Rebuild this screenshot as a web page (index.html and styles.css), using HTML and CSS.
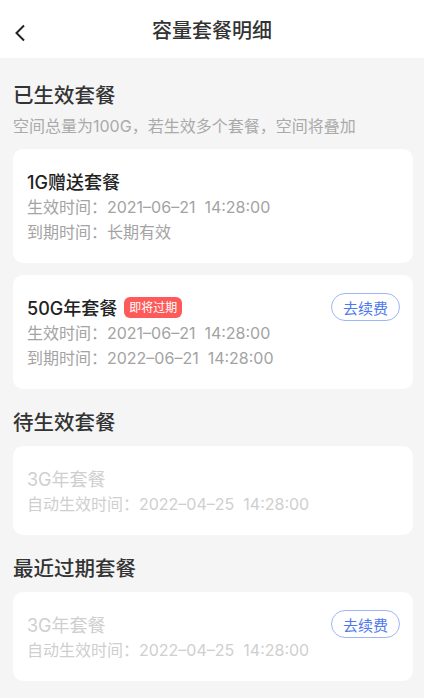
FILE: index.html
```html
<!DOCTYPE html>
<html lang="zh-CN">
<head>
    <meta charset="UTF-8">
    <meta name="viewport" content="width=device-width, initial-scale=1.0">
    <title>容量套餐明细</title>
    <link rel="stylesheet" href="styles.css">
</head>
<body>

<header class="nav">
    <span class="back">
        <svg width="12" height="18" viewBox="0 0 12 18"><path d="M10 1.5 L2.5 9 L10 16.5" fill="none" stroke="#222" stroke-width="2"/></svg>
    </span>
    <h1>容量套餐明细</h1>
</header>

<main>
    <h2 class="section-title">已生效套餐</h2>
    <p class="section-tip">空间总量为100G，若生效多个套餐，空间将叠加</p>

    <div class="card">
        <div class="card-head">
            <div class="card-name">1G赠送套餐</div>
        </div>
        <div class="card-line">生效时间：2021–06–21&nbsp;&nbsp;14:28:00</div>
        <div class="card-line">到期时间：长期有效</div>
    </div>

    <div class="card">
        <div class="card-head">
            <div class="card-name">50G年套餐</div>
            <span class="badge">即将过期</span>
            <button class="renew">去续费</button>
        </div>
        <div class="card-line">生效时间：2021–06–21&nbsp;&nbsp;14:28:00</div>
        <div class="card-line">到期时间：2022–06–21&nbsp;&nbsp;14:28:00</div>
    </div>

    <h2 class="section-title">待生效套餐</h2>
    <div class="card disabled">
        <div class="card-head">
            <div class="card-name">3G年套餐</div>
        </div>
        <div class="card-line">自动生效时间：2022–04–25&nbsp;&nbsp;14:28:00</div>
    </div>

    <h2 class="section-title">最近过期套餐</h2>
    <div class="card disabled">
        <div class="card-head">
            <div class="card-name">3G年套餐</div>
            <button class="renew">去续费</button>
        </div>
        <div class="card-line">自动生效时间：2022–04–25&nbsp;&nbsp;14:28:00</div>
    </div>
</main>

</body>
</html>
```

FILE: styles.css
```css
body {
    font-family: "Inter", "Noto Sans CJK SC", sans-serif;
    background-color: #f5f5f5;
    margin: 0;
    padding: 0;
    color: #333;
}

.nav {
    height: 58px;
    background-color: #fff;
    display: flex;
    align-items: center;
    justify-content: center;
    position: relative;
}

.back {
    position: absolute;
    left: 14px;
    top: 24px;
    display: flex;
}

.nav h1 {
    margin: 0;
    font-size: 20px;
    font-weight: 500;
    color: #333;
}

main {
    padding: 0 11px 0 13px;
}

.section-title {
    margin: 19px 0 8px;
    font-size: 20.5px;
    line-height: 30px;
    font-weight: 500;
    color: #333;
}

main > .section-title:first-child {
    margin-top: 23px;
    margin-bottom: 0;
}

.section-tip {
    margin: 4px 0 12px;
    font-size: 16px;
    line-height: 22px;
    color: #aaa;
}

.card {
    background-color: #fff;
    border-radius: 10px;
    padding: 18px 14px;
    margin-bottom: 12px;
}

.card-head {
    display: flex;
    align-items: center;
    height: 28px;
}

.card-name {
    font-size: 18px;
    font-weight: 500;
    color: #222;
}

.badge {
    margin-left: 7px;
    background-color: #ff5a5a;
    color: #fff;
    font-size: 12px;
    line-height: 21px;
    padding: 0 5px;
    border-radius: 6px;
}

.renew {
    margin-left: auto;
    margin-right: -1px;
    height: 28px;
    width: 69px;
    border: 1px solid #9db6f7;
    border-radius: 14px;
    background-color: #fff;
    color: #4d78ee;
    font-family: inherit;
    font-size: 15px;
    padding: 0;
}

.card-line {
    font-size: 16px;
    line-height: 25px;
    color: #a3a3a3;
}

.disabled .card-name,
.disabled .card-line {
    color: #cfcfcf;
}

.disabled .card-name {
    font-weight: 400;
}
```
